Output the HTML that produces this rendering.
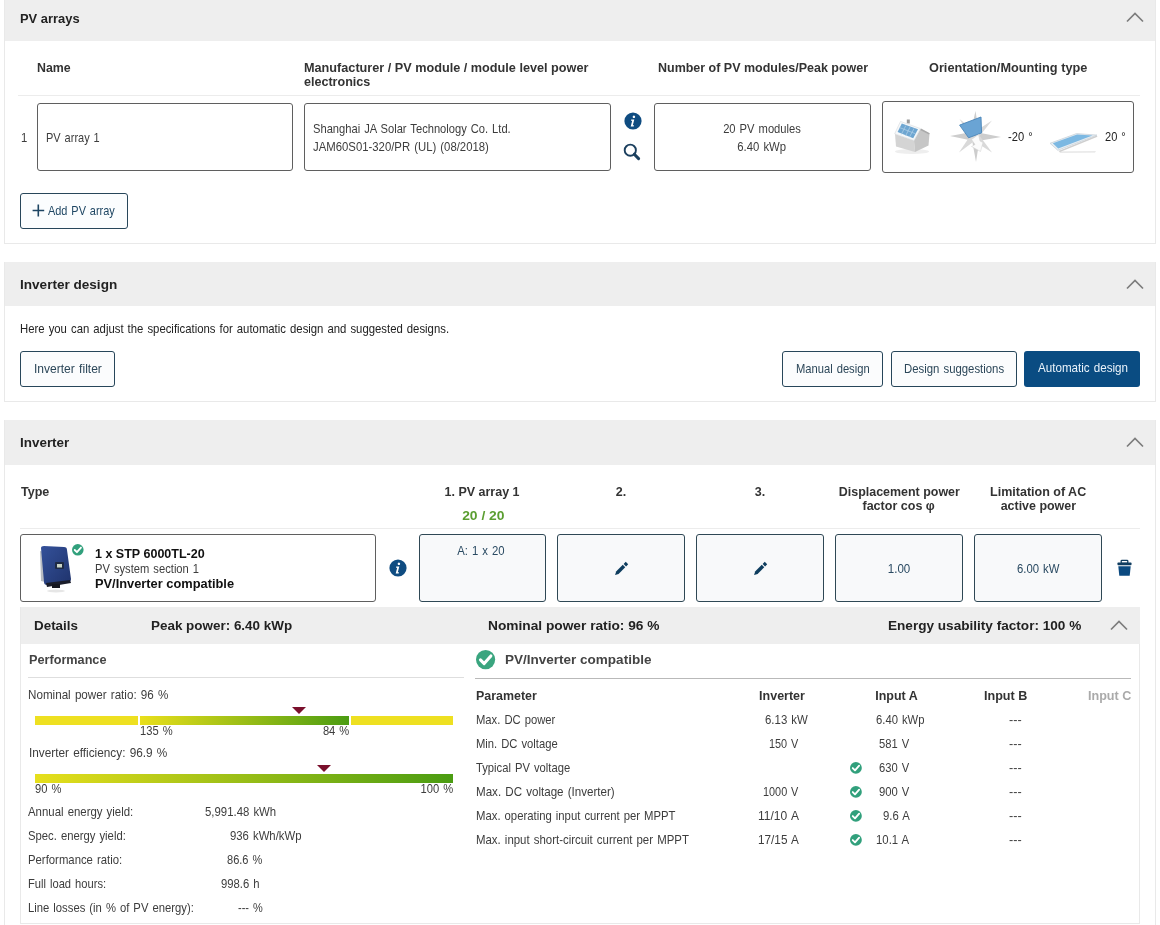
<!DOCTYPE html>
<html><head><meta charset="utf-8"><title>Sunny Design</title>
<style>
html,body{margin:0;padding:0;background:#fff;}
body{width:1160px;height:925px;overflow:hidden;position:relative;font-family:"Liberation Sans",sans-serif;}
body>div{position:absolute;box-sizing:border-box;white-space:pre;}
</style></head><body>
<div style="left:4px;top:-5px;width:1152px;height:249px;border:1px solid #e9e9e9;border-top:none;background:#fff"></div>
<div style="left:4px;top:-5px;width:1152px;height:46px;background:#eeeeee;border-left:1px solid #e9e9e9;border-right:1px solid #e9e9e9"></div>
<div style="left:19.5px;top:10.5px;width:600px;height:16px;font-size:13px;line-height:16px;font-weight:700;color:#222;text-align:left;word-spacing:0px;"><span id="t1" style="display:inline-block;transform:scaleX(0.9933);transform-origin:0 50%">PV arrays</span></div>
<svg style="position:absolute;left:1125px;top:11.4px;overflow:visible;" width="20" height="13" viewBox="0 0 20 13"><polyline points="2,10.5 10,2.5 18,10.5" fill="none" stroke="#7c7c7c" stroke-width="1.7"/></svg>
<div style="left:37px;top:59.75px;width:600px;height:16px;font-size:12px;line-height:16px;font-weight:700;color:#333;text-align:left;word-spacing:0px;"><span id="t2" style="display:inline-block;transform:scaleX(1.0302);transform-origin:0 50%">Name</span></div>
<div style="left:304px;top:59.5px;width:600px;height:16px;font-size:12px;line-height:16px;font-weight:700;color:#333;text-align:left;word-spacing:0px;"><span id="t3" style="display:inline-block;transform:scaleX(1.0558);transform-origin:0 50%">Manufacturer / PV module / module level power</span></div>
<div style="left:304px;top:73.75px;width:600px;height:16px;font-size:12px;line-height:16px;font-weight:700;color:#333;text-align:left;word-spacing:0px;"><span id="t4" style="display:inline-block;transform:scaleX(1.0462);transform-origin:0 50%">electronics</span></div>
<div style="left:658px;top:59.75px;width:600px;height:16px;font-size:12px;line-height:16px;font-weight:700;color:#333;text-align:left;word-spacing:0px;"><span id="t5" style="display:inline-block;transform:scaleX(1.0396);transform-origin:0 50%">Number of PV modules/Peak power</span></div>
<div style="left:929px;top:59.75px;width:600px;height:16px;font-size:12px;line-height:16px;font-weight:700;color:#333;text-align:left;word-spacing:0px;"><span id="t6" style="display:inline-block;transform:scaleX(1.0604);transform-origin:0 50%">Orientation/Mounting type</span></div>
<div style="left:18px;top:95px;width:1122px;height:1px;background:#ececec"></div>
<div style="left:21px;top:129.75px;width:600px;height:16px;font-size:12.4px;line-height:16px;font-weight:400;color:#3d3d3d;text-align:left;word-spacing:1.0px;"><span id="t7" style="display:inline-block;transform:scaleX(0.9124);transform-origin:0 50%">1</span></div>
<div style="left:37px;top:103px;width:256px;height:68px;border:1px solid #5f5f5f;border-radius:3px;background:#fff"></div>
<div style="left:45.6px;top:129.75px;width:600px;height:16px;font-size:12.4px;line-height:16px;font-weight:400;color:#3d3d3d;text-align:left;word-spacing:1.0px;"><span id="t8" style="display:inline-block;transform:scaleX(0.8877);transform-origin:0 50%">PV array 1</span></div>
<div style="left:304px;top:103px;width:307px;height:68px;border:1px solid #5f5f5f;border-radius:3px;background:#fff"></div>
<div style="left:312.8px;top:120.75px;width:600px;height:16px;font-size:12.4px;line-height:16px;font-weight:400;color:#3d3d3d;text-align:left;word-spacing:1.0px;"><span id="t9" style="display:inline-block;transform:scaleX(0.9000);transform-origin:0 50%">Shanghai JA Solar Technology Co. Ltd.</span></div>
<div style="left:312.8px;top:138.75px;width:600px;height:16px;font-size:12.4px;line-height:16px;font-weight:400;color:#3d3d3d;text-align:left;word-spacing:1.0px;"><span id="t10" style="display:inline-block;transform:scaleX(0.9157);transform-origin:0 50%">JAM60S01-320/PR (UL) (08/2018)</span></div>
<svg style="position:absolute;left:624px;top:112px;overflow:visible;" width="18" height="18" viewBox="0 0 18 18"><circle cx="9" cy="9" r="8.6" fill="#0f4c81"/><path d="M9.9 3.6a1.25 1.25 0 1 0 0.01 0z" fill="#fff"/><path d="M7.2 7.6h3.1l-1.5 5.6h1.2l-0.3 1.2h-3l1.5-5.6h-1.2z" fill="#fff"/></svg>
<svg style="position:absolute;left:622px;top:142px;overflow:visible;" width="20" height="20" viewBox="0 0 20 20"><circle cx="8.3" cy="8.2" r="5.6" fill="none" stroke="#1b3f5e" stroke-width="1.9"/><line x1="12.3" y1="12.2" x2="16.6" y2="16.6" stroke="#1b3f5e" stroke-width="3" stroke-linecap="round"/></svg>
<div style="left:654px;top:103px;width:217px;height:68px;border:1px solid #5f5f5f;border-radius:3px;background:#fff"></div>
<div style="left:462.0px;top:120.75px;width:600px;height:16px;font-size:12.4px;line-height:16px;font-weight:400;color:#3d3d3d;text-align:center;word-spacing:1.0px;"><span id="t11" style="display:inline-block;transform:scaleX(0.9038);transform-origin:50% 50%">20 PV modules</span></div>
<div style="left:462.0px;top:138.75px;width:600px;height:16px;font-size:12.4px;line-height:16px;font-weight:400;color:#3d3d3d;text-align:center;word-spacing:1.0px;"><span id="t12" style="display:inline-block;transform:scaleX(0.9136);transform-origin:50% 50%">6.40 kWp</span></div>
<div style="left:882px;top:101px;width:252px;height:72px;border:1px solid #5f5f5f;border-radius:3px;background:#fff"></div>
<svg style="position:absolute;left:888px;top:112px;overflow:visible;filter:blur(0.35px)" width="48" height="48" viewBox="0 0 48 48">
<ellipse cx="24" cy="39.5" rx="17" ry="2.6" fill="#eeeeee"/>
<path d="M7 22 L26 28.5 L27 40 L8 34.5 Z" fill="#d4d4d4"/>
<path d="M26 28.5 L32.5 16.8 L41.5 21.5 L40.5 33.5 L27 40 Z" fill="#c6c6c6"/>
<path d="M33 16.5 L41.8 21.2 L41 22.6 L32.6 18.2 Z" fill="#aaaaaa"/>
<rect x="18.8" y="7.5" width="3" height="4" fill="#9a9a9a"/>
<path d="M6.7 21.8 L12.5 9.4 L32.4 16.6 L26 28.5 Z" fill="#f7f9fa" stroke="#d6dadd" stroke-width="0.6"/>
<path d="M9.6 19.9 L13.8 11.4 L30 17.3 L25.2 26.3 Z" fill="#6ea6d1"/>
<path d="M11.7 15.6 L27.6 21.8 M17.8 13.6 L13.3 22.5 M22 15.1 L17.5 24 M26 16.6 L21.4 25.3" stroke="#b3d1e8" stroke-width="0.7"/>
</svg>
<svg style="position:absolute;left:944px;top:106px;overflow:visible;filter:blur(0.45px)" width="60" height="60" viewBox="0 0 60 60">
<g fill="#cdcdcd">
<path d="M31.5 5 L35 27 L30 30 L26.5 27 Z"/>
<path d="M57 31 L34 35 L30 30 L34 26.5 Z"/>
<path d="M32 56 L28 34 L30 30 L35.5 34 Z"/>
<path d="M6 30 L27.5 26 L30 30 L27.5 34.5 Z"/>
</g>
<g fill="#d9d9d9">
<path d="M48 14.5 L34 32 L30 30 L31 25.5 Z"/>
<path d="M48 46.5 L30 35 L30 30 L35 29 Z"/>
<path d="M15 46.5 L26 30 L30 30 L30.5 35 Z"/>
<path d="M15.5 13 L32 25.5 L30 30 L26 30.5 Z"/>
</g>
<path d="M15.6 19.1 L37 11 L37.6 26.9 L24.6 31.8 Z" fill="#6aa4d4" stroke="#4a84b8" stroke-width="0.9"/>
<path d="M27.5 33.5 L34.5 28.5 L36 35 L39 36.5 L36.5 45.5 L27.5 40.5 L31 38.5 Z" fill="#fbfbfb" stroke="#cfcfcf" stroke-width="0.5"/>
</svg>
<div style="left:1007.5px;top:128.75px;width:600px;height:16px;font-size:12.4px;line-height:16px;font-weight:400;color:#222;text-align:left;word-spacing:1.0px;"><span id="t13" style="display:inline-block;transform:scaleX(0.9014);transform-origin:0 50%">-20 °</span></div>
<svg style="position:absolute;left:1040px;top:120px;overflow:visible;filter:blur(0.35px)" width="60" height="36" viewBox="0 0 60 36">
<path d="M19 31.5 L56 31.2 L55 32.6 L20 32.8 Z" fill="#e2e2e2"/>
<path d="M18.5 31 L56.5 15.5 L57.5 16.8 L20 32 Z" fill="#cfcfcf"/>
<path d="M10 23.3 L36.5 13.6 L57 15.1 L17.8 30.3 Z" fill="#e8eef3" stroke="#c9d2d9" stroke-width="0.8"/>
<path d="M12.8 23.2 L37 14.6 L52.5 15.6 L18.2 28.6 Z" fill="#7cb8e2"/>
</svg>
<div style="left:1104.8px;top:128.75px;width:600px;height:16px;font-size:12.4px;line-height:16px;font-weight:400;color:#222;text-align:left;word-spacing:1.0px;"><span id="t14" style="display:inline-block;transform:scaleX(0.8921);transform-origin:0 50%">20 °</span></div>
<div style="left:20px;top:193px;width:108px;height:36px;border:1px solid #27465a;border-radius:3px;background:#fbfdfe"></div>
<svg style="position:absolute;left:32px;top:204px;overflow:visible;" width="13" height="13" viewBox="0 0 13 13"><path d="M6.3 0.5v12M0.6 6.5h11.6" stroke="#1e4663" stroke-width="1.6"/></svg>
<div style="left:47.6px;top:203.0px;width:600px;height:16px;font-size:12.4px;line-height:16px;font-weight:400;color:#1e4663;text-align:left;word-spacing:1.0px;"><span id="t15" style="display:inline-block;transform:scaleX(0.8816);transform-origin:0 50%">Add PV array</span></div>
<div style="left:4px;top:262px;width:1152px;height:140px;border:1px solid #e9e9e9;border-top:none;background:#fff"></div>
<div style="left:4px;top:262px;width:1152px;height:44px;background:#eeeeee;border-left:1px solid #e9e9e9;border-right:1px solid #e9e9e9"></div>
<div style="left:19.5px;top:276.5px;width:600px;height:16px;font-size:13px;line-height:16px;font-weight:700;color:#222;text-align:left;word-spacing:0px;"><span id="t16" style="display:inline-block;transform:scaleX(1.0430);transform-origin:0 50%">Inverter design</span></div>
<svg style="position:absolute;left:1125px;top:278.4px;overflow:visible;" width="20" height="13" viewBox="0 0 20 13"><polyline points="2,10.5 10,2.5 18,10.5" fill="none" stroke="#7c7c7c" stroke-width="1.7"/></svg>
<div style="left:20.2px;top:321.0px;width:600px;height:16px;font-size:12.4px;line-height:16px;font-weight:400;color:#222;text-align:left;word-spacing:1.0px;"><span id="t17" style="display:inline-block;transform:scaleX(0.9147);transform-origin:0 50%">Here you can adjust the specifications for automatic design and suggested designs.</span></div>
<div style="left:20px;top:351px;width:95px;height:36px;border:1px solid #27465a;border-radius:3px;background:#fbfcfd"></div>
<div style="left:33.6px;top:360.5px;width:600px;height:16px;font-size:12.4px;line-height:16px;font-weight:400;color:#2c4759;text-align:left;word-spacing:1.0px;"><span id="t18" style="display:inline-block;transform:scaleX(0.9714);transform-origin:0 50%">Inverter filter</span></div>
<div style="left:782px;top:351px;width:101px;height:36px;border:1px solid #27465a;border-radius:3px;background:#fbfcfd"></div>
<div style="left:796px;top:360.5px;width:600px;height:16px;font-size:12.4px;line-height:16px;font-weight:400;color:#2c4759;text-align:left;word-spacing:1.0px;"><span id="t19" style="display:inline-block;transform:scaleX(0.9024);transform-origin:0 50%">Manual design</span></div>
<div style="left:891px;top:351px;width:126px;height:36px;border:1px solid #27465a;border-radius:3px;background:#fbfcfd"></div>
<div style="left:904px;top:360.5px;width:600px;height:16px;font-size:12.4px;line-height:16px;font-weight:400;color:#2c4759;text-align:left;word-spacing:1.0px;"><span id="t20" style="display:inline-block;transform:scaleX(0.9174);transform-origin:0 50%">Design suggestions</span></div>
<div style="left:1024px;top:351px;width:116px;height:36px;background:#0a4c82;border-radius:3px"></div>
<div style="left:1037.5px;top:360.25px;width:600px;height:16px;font-size:12.4px;line-height:16px;font-weight:400;color:#eaf3fb;text-align:left;word-spacing:1.0px;"><span id="t21" style="display:inline-block;transform:scaleX(0.9375);transform-origin:0 50%">Automatic design</span></div>
<div style="left:4px;top:420px;width:1152px;height:511px;border:1px solid #e9e9e9;border-top:none;background:#fff"></div>
<div style="left:4px;top:420px;width:1152px;height:45px;background:#eeeeee;border-left:1px solid #e9e9e9;border-right:1px solid #e9e9e9"></div>
<div style="left:19.5px;top:434.5px;width:600px;height:16px;font-size:13px;line-height:16px;font-weight:700;color:#222;text-align:left;word-spacing:0px;"><span id="t22" style="display:inline-block;transform:scaleX(1.0336);transform-origin:0 50%">Inverter</span></div>
<svg style="position:absolute;left:1125px;top:436.4px;overflow:visible;" width="20" height="13" viewBox="0 0 20 13"><polyline points="2,10.5 10,2.5 18,10.5" fill="none" stroke="#7c7c7c" stroke-width="1.7"/></svg>
<div style="left:20.5px;top:483.75px;width:600px;height:16px;font-size:12px;line-height:16px;font-weight:700;color:#333;text-align:left;word-spacing:0px;"><span id="t23" style="display:inline-block;transform:scaleX(1.0448);transform-origin:0 50%">Type</span></div>
<div style="left:182.39999999999998px;top:483.75px;width:600px;height:16px;font-size:12px;line-height:16px;font-weight:700;color:#333;text-align:center;word-spacing:0px;"><span id="t24" style="display:inline-block;transform:scaleX(1.0409);transform-origin:50% 50%">1. PV array 1</span></div>
<div style="left:183.0px;top:507.75px;width:600px;height:16px;font-size:12px;line-height:16px;font-weight:700;color:#5b9e31;text-align:center;word-spacing:0px;"><span id="t25" style="display:inline-block;transform:scaleX(1.1541);transform-origin:50% 50%">20 / 20</span></div>
<div style="left:321.5px;top:483.75px;width:600px;height:16px;font-size:12px;line-height:16px;font-weight:700;color:#333;text-align:center;word-spacing:0px;"><span id="t26" style="display:inline-block;transform:scaleX(1.0416);transform-origin:50% 50%">2.</span></div>
<div style="left:460.5px;top:483.75px;width:600px;height:16px;font-size:12px;line-height:16px;font-weight:700;color:#333;text-align:center;word-spacing:0px;"><span id="t27" style="display:inline-block;transform:scaleX(1.0416);transform-origin:50% 50%">3.</span></div>
<div style="left:599.0px;top:483.75px;width:600px;height:16px;font-size:12px;line-height:16px;font-weight:700;color:#333;text-align:center;word-spacing:0px;"><span id="t28" style="display:inline-block;transform:scaleX(1.0374);transform-origin:50% 50%">Displacement power</span></div>
<div style="left:599.0px;top:498.25px;width:600px;height:16px;font-size:12px;line-height:16px;font-weight:700;color:#333;text-align:center;word-spacing:0px;"><span id="t29" style="display:inline-block;transform:scaleX(1.0442);transform-origin:50% 50%">factor cos φ</span></div>
<div style="left:738.0px;top:483.75px;width:600px;height:16px;font-size:12px;line-height:16px;font-weight:700;color:#333;text-align:center;word-spacing:0px;"><span id="t30" style="display:inline-block;transform:scaleX(1.0425);transform-origin:50% 50%">Limitation of AC</span></div>
<div style="left:738.0px;top:498.25px;width:600px;height:16px;font-size:12px;line-height:16px;font-weight:700;color:#333;text-align:center;word-spacing:0px;"><span id="t31" style="display:inline-block;transform:scaleX(1.0358);transform-origin:50% 50%">active power</span></div>
<div style="left:20px;top:528px;width:1120px;height:1px;background:#ececec"></div>
<div style="left:20px;top:534px;width:356px;height:68px;border:1px solid #5f5f5f;border-radius:3px;background:#fff"></div>
<svg style="position:absolute;left:36px;top:543px;overflow:visible;filter:blur(0.3px)" width="40" height="50" viewBox="0 0 40 50">
<defs><linearGradient id="inv" x1="0" y1="0" x2="1" y2="1"><stop offset="0" stop-color="#34519a"/><stop offset="1" stop-color="#1f336c"/></linearGradient></defs>
<ellipse cx="20" cy="48" rx="9" ry="1.5" fill="#e6e6e6"/>
<path d="M4 8 L5 38 L9 39 L8 9 Z" fill="#b8bcc2"/>
<path d="M5 5 Q5 3 8 3 L28 4 Q31 4 31 7 L35 36 Q35 39 32 39 L11 42 Q8 42 8 39 Z" fill="url(#inv)"/>
<path d="M10 40 L34 37 L35 40 L11 44 Z" fill="#1a1d2a"/>
<rect x="16" y="41" width="8" height="4" fill="#15171f"/>
<rect x="19" y="19" width="9" height="7" rx="1" fill="#1e2a44"/>
<rect x="21" y="21" width="5" height="3.5" fill="#c9d4c6"/>
</svg>
<svg style="position:absolute;left:71.9px;top:543.7px;overflow:visible;" width="11.6" height="11.6" viewBox="0 0 11.6 11.6"><circle cx="5.8" cy="5.8" r="5.8" fill="#31a07c"/><polyline points="2.706666666666666,5.993333333333333 4.93,8.216666666666667 8.99,3.5766666666666667" fill="none" stroke="#fff" stroke-width="1.8366666666666667" stroke-linecap="round" stroke-linejoin="round"/></svg>
<div style="left:95.2px;top:545.75px;width:600px;height:16px;font-size:12px;line-height:16px;font-weight:700;color:#111;text-align:left;word-spacing:0px;"><span id="t32" style="display:inline-block;transform:scaleX(1.0429);transform-origin:0 50%">1 x STP 6000TL-20</span></div>
<div style="left:95.2px;top:560.75px;width:600px;height:16px;font-size:12.4px;line-height:16px;font-weight:400;color:#3d3d3d;text-align:left;word-spacing:1.0px;"><span id="t33" style="display:inline-block;transform:scaleX(0.9028);transform-origin:0 50%">PV system section 1</span></div>
<div style="left:95.2px;top:575.75px;width:600px;height:16px;font-size:12px;line-height:16px;font-weight:700;color:#111;text-align:left;word-spacing:0px;"><span id="t34" style="display:inline-block;transform:scaleX(1.0692);transform-origin:0 50%">PV/Inverter compatible</span></div>
<svg style="position:absolute;left:389px;top:559px;overflow:visible;" width="18" height="18" viewBox="0 0 18 18"><circle cx="9" cy="9" r="8.6" fill="#0f4c81"/><path d="M9.9 3.6a1.25 1.25 0 1 0 0.01 0z" fill="#fff"/><path d="M7.2 7.6h3.1l-1.5 5.6h1.2l-0.3 1.2h-3l1.5-5.6h-1.2z" fill="#fff"/></svg>
<div style="left:419px;top:534px;width:127px;height:68px;border:1px solid #2f4855;border-radius:3px;background:#f8f9fa"></div>
<div style="left:180.5px;top:542.75px;width:600px;height:16px;font-size:12.4px;line-height:16px;font-weight:400;color:#2a4a62;text-align:center;word-spacing:1.0px;"><span id="t35" style="display:inline-block;transform:scaleX(0.9135);transform-origin:50% 50%">A: 1 x 20</span></div>
<div style="left:557px;top:534px;width:128px;height:68px;border:1px solid #2f4855;border-radius:3px;background:#f8f9fa"></div>
<svg style="position:absolute;left:611.3px;top:559.2px;overflow:visible;" width="20" height="20" viewBox="0 0 20 20"><g transform="rotate(45 10 10)"><rect x="8.3" y="1.6" width="3.5" height="3" fill="#0e3d5e"/><path d="M8.3 5.8h3.5v9.4l-1.75 3.2l-1.75-3.2z" fill="#0e3d5e"/></g></svg>
<div style="left:696px;top:534px;width:128px;height:68px;border:1px solid #2f4855;border-radius:3px;background:#f8f9fa"></div>
<svg style="position:absolute;left:749.5px;top:559.2px;overflow:visible;" width="20" height="20" viewBox="0 0 20 20"><g transform="rotate(45 10 10)"><rect x="8.3" y="1.6" width="3.5" height="3" fill="#0e3d5e"/><path d="M8.3 5.8h3.5v9.4l-1.75 3.2l-1.75-3.2z" fill="#0e3d5e"/></g></svg>
<div style="left:835px;top:534px;width:128px;height:68px;border:1px solid #2f4855;border-radius:3px;background:#f8f9fa"></div>
<div style="left:599.0px;top:560.75px;width:600px;height:16px;font-size:12.4px;line-height:16px;font-weight:400;color:#2a4a62;text-align:center;word-spacing:1.0px;"><span id="t36" style="display:inline-block;transform:scaleX(0.9295);transform-origin:50% 50%">1.00</span></div>
<div style="left:974px;top:534px;width:128px;height:68px;border:1px solid #2f4855;border-radius:3px;background:#f8f9fa"></div>
<div style="left:738.0px;top:560.75px;width:600px;height:16px;font-size:12.4px;line-height:16px;font-weight:400;color:#2a4a62;text-align:center;word-spacing:1.0px;"><span id="t37" style="display:inline-block;transform:scaleX(0.9138);transform-origin:50% 50%">6.00 kW</span></div>
<svg style="position:absolute;left:1116.5px;top:560px;overflow:visible;" width="16" height="18" viewBox="0 0 16 18"><rect x="4.2" y="0.3" width="6.6" height="3" rx="0.8" fill="none" stroke="#103d60" stroke-width="1.3"/><rect x="0.5" y="2.6" width="14" height="2.6" rx="0.6" fill="#103d60"/><path d="M1.3 6.2h12.4l-1 9.6h-10.4z" fill="#0b4a80"/></svg>
<div style="left:20px;top:607px;width:1120px;height:317px;border:1px solid #e9e9e9;background:#fff"></div>
<div style="left:21px;top:607px;width:1119px;height:37px;background:#eeeeee"></div>
<div style="left:34px;top:617.5px;width:600px;height:16px;font-size:13px;line-height:16px;font-weight:700;color:#222;text-align:left;word-spacing:0px;"><span id="t38" style="display:inline-block;transform:scaleX(1.0313);transform-origin:0 50%">Details</span></div>
<div style="left:151px;top:617.5px;width:600px;height:16px;font-size:13px;line-height:16px;font-weight:700;color:#222;text-align:left;word-spacing:0px;"><span id="t39" style="display:inline-block;transform:scaleX(1.0336);transform-origin:0 50%">Peak power: 6.40 kWp</span></div>
<div style="left:488px;top:617.5px;width:600px;height:16px;font-size:13px;line-height:16px;font-weight:700;color:#222;text-align:left;word-spacing:0px;"><span id="t40" style="display:inline-block;transform:scaleX(1.0552);transform-origin:0 50%">Nominal power ratio: 96 %</span></div>
<div style="left:887.7px;top:617.5px;width:600px;height:16px;font-size:13px;line-height:16px;font-weight:700;color:#222;text-align:left;word-spacing:0px;"><span id="t41" style="display:inline-block;transform:scaleX(1.0449);transform-origin:0 50%">Energy usability factor: 100 %</span></div>
<svg style="position:absolute;left:1108.5px;top:618.8px;overflow:visible;" width="20" height="13" viewBox="0 0 20 13"><polyline points="2,10.5 10,2.5 18,10.5" fill="none" stroke="#7c7c7c" stroke-width="1.7"/></svg>
<div style="left:28.6px;top:651.5px;width:600px;height:16px;font-size:13px;line-height:16px;font-weight:700;color:#444;text-align:left;word-spacing:0px;"><span id="t42" style="display:inline-block;transform:scaleX(0.9747);transform-origin:0 50%">Performance</span></div>
<div style="left:28px;top:677px;width:436px;height:1px;background:#dedede"></div>
<svg style="position:absolute;left:475.7px;top:649.9px;overflow:visible;" width="19.2" height="19.2" viewBox="0 0 19.2 19.2"><circle cx="9.6" cy="9.6" r="9.6" fill="#3aa57f"/><polyline points="4.4799999999999995,9.92 8.16,13.6 14.879999999999999,5.92" fill="none" stroke="#fff" stroke-width="3.0399999999999996" stroke-linecap="round" stroke-linejoin="round"/></svg>
<div style="left:505.3px;top:651.5px;width:600px;height:16px;font-size:13px;line-height:16px;font-weight:700;color:#444;text-align:left;word-spacing:0px;"><span id="t43" style="display:inline-block;transform:scaleX(1.0392);transform-origin:0 50%">PV/Inverter compatible</span></div>
<div style="left:475px;top:678px;width:656px;height:1px;background:#b9b9b9"></div>
<div style="left:28px;top:686.75px;width:600px;height:16px;font-size:12.4px;line-height:16px;font-weight:400;color:#3d3d3d;text-align:left;word-spacing:1.0px;"><span id="t44" style="display:inline-block;transform:scaleX(0.9396);transform-origin:0 50%">Nominal power ratio: 96 %</span></div>
<div style="left:35px;top:716px;width:103px;height:9px;background:#eee021"></div>
<div style="left:140px;top:716px;width:209px;height:9px;background:linear-gradient(to right,#e9df1b,#4b9c12)"></div>
<div style="left:351px;top:716px;width:102px;height:9px;background:#eee021"></div>
<svg style="position:absolute;left:292px;top:707px;overflow:visible;" width="14" height="7" viewBox="0 0 14 7"><path d="M0 0h14l-7 7z" fill="#7a0f2c"/></svg>
<div style="left:140.4px;top:723.25px;width:600px;height:16px;font-size:12.4px;line-height:16px;font-weight:400;color:#3d3d3d;text-align:left;word-spacing:1.0px;"><span id="t45" style="display:inline-block;transform:scaleX(0.9028);transform-origin:0 50%">135 %</span></div>
<div style="left:-251px;top:723.25px;width:600px;height:16px;font-size:12.4px;line-height:16px;font-weight:400;color:#3d3d3d;text-align:right;word-spacing:1.0px;"><span id="t46" style="display:inline-block;transform:scaleX(0.9010);transform-origin:100% 50%">84 %</span></div>
<div style="left:28.5px;top:745.25px;width:600px;height:16px;font-size:12.4px;line-height:16px;font-weight:400;color:#3d3d3d;text-align:left;word-spacing:1.0px;"><span id="t47" style="display:inline-block;transform:scaleX(0.9517);transform-origin:0 50%">Inverter efficiency: 96.9 %</span></div>
<div style="left:35px;top:774px;width:418px;height:9px;background:linear-gradient(to right,#e7df1c,#4a9c12)"></div>
<svg style="position:absolute;left:317px;top:765px;overflow:visible;" width="14" height="7" viewBox="0 0 14 7"><path d="M0 0h14l-7 7z" fill="#7a0f2c"/></svg>
<div style="left:35px;top:781.25px;width:600px;height:16px;font-size:12.4px;line-height:16px;font-weight:400;color:#3d3d3d;text-align:left;word-spacing:1.0px;"><span id="t48" style="display:inline-block;transform:scaleX(0.9010);transform-origin:0 50%">90 %</span></div>
<div style="left:-147px;top:781.25px;width:600px;height:16px;font-size:12.4px;line-height:16px;font-weight:400;color:#3d3d3d;text-align:right;word-spacing:1.0px;"><span id="t49" style="display:inline-block;transform:scaleX(0.9028);transform-origin:100% 50%">100 %</span></div>
<div style="left:28px;top:804.0px;width:600px;height:16px;font-size:12.4px;line-height:16px;font-weight:400;color:#3d3d3d;text-align:left;word-spacing:1.0px;"><span id="t50" style="display:inline-block;transform:scaleX(0.9211);transform-origin:0 50%">Annual energy yield:</span></div>
<div style="left:204.8px;top:804.0px;width:600px;height:16px;font-size:12.4px;line-height:16px;font-weight:400;color:#3d3d3d;text-align:left;word-spacing:1.0px;"><span id="t51" style="display:inline-block;transform:scaleX(0.9184);transform-origin:0 50%">5,991.48 kWh</span></div>
<div style="left:28px;top:827.75px;width:600px;height:16px;font-size:12.4px;line-height:16px;font-weight:400;color:#3d3d3d;text-align:left;word-spacing:1.0px;"><span id="t52" style="display:inline-block;transform:scaleX(0.9109);transform-origin:0 50%">Spec. energy yield:</span></div>
<div style="left:230.4px;top:827.75px;width:600px;height:16px;font-size:12.4px;line-height:16px;font-weight:400;color:#3d3d3d;text-align:left;word-spacing:1.0px;"><span id="t53" style="display:inline-block;transform:scaleX(0.9146);transform-origin:0 50%">936 kWh/kWp</span></div>
<div style="left:28px;top:851.75px;width:600px;height:16px;font-size:12.4px;line-height:16px;font-weight:400;color:#3d3d3d;text-align:left;word-spacing:1.0px;"><span id="t54" style="display:inline-block;transform:scaleX(0.9153);transform-origin:0 50%">Performance ratio:</span></div>
<div style="left:227px;top:851.75px;width:600px;height:16px;font-size:12.4px;line-height:16px;font-weight:400;color:#3d3d3d;text-align:left;word-spacing:1.0px;"><span id="t55" style="display:inline-block;transform:scaleX(0.8920);transform-origin:0 50%">86.6 %</span></div>
<div style="left:28px;top:875.5px;width:600px;height:16px;font-size:12.4px;line-height:16px;font-weight:400;color:#3d3d3d;text-align:left;word-spacing:1.0px;"><span id="t56" style="display:inline-block;transform:scaleX(0.9006);transform-origin:0 50%">Full load hours:</span></div>
<div style="left:221px;top:875.5px;width:600px;height:16px;font-size:12.4px;line-height:16px;font-weight:400;color:#3d3d3d;text-align:left;word-spacing:1.0px;"><span id="t57" style="display:inline-block;transform:scaleX(0.9106);transform-origin:0 50%">998.6 h</span></div>
<div style="left:28px;top:899.5px;width:600px;height:16px;font-size:12.4px;line-height:16px;font-weight:400;color:#3d3d3d;text-align:left;word-spacing:1.0px;"><span id="t58" style="display:inline-block;transform:scaleX(0.9093);transform-origin:0 50%">Line losses (in % of PV energy):</span></div>
<div style="left:237.5px;top:899.5px;width:600px;height:16px;font-size:12.4px;line-height:16px;font-weight:400;color:#3d3d3d;text-align:left;word-spacing:1.0px;"><span id="t59" style="display:inline-block;transform:scaleX(0.8868);transform-origin:0 50%">--- %</span></div>
<div style="left:475.5px;top:687.5px;width:600px;height:16px;font-size:12px;line-height:16px;font-weight:700;color:#333;text-align:left;word-spacing:0px;"><span id="t60" style="display:inline-block;transform:scaleX(1.0350);transform-origin:0 50%">Parameter</span></div>
<div style="left:482.0px;top:687.5px;width:600px;height:16px;font-size:12px;line-height:16px;font-weight:700;color:#333;text-align:center;word-spacing:0px;"><span id="t61" style="display:inline-block;transform:scaleX(1.0407);transform-origin:50% 50%">Inverter</span></div>
<div style="left:596.0px;top:687.5px;width:600px;height:16px;font-size:12px;line-height:16px;font-weight:700;color:#333;text-align:center;word-spacing:0px;"><span id="t62" style="display:inline-block;transform:scaleX(1.0368);transform-origin:50% 50%">Input A</span></div>
<div style="left:705.8px;top:687.5px;width:600px;height:16px;font-size:12px;line-height:16px;font-weight:700;color:#333;text-align:center;word-spacing:0px;"><span id="t63" style="display:inline-block;transform:scaleX(1.0483);transform-origin:50% 50%">Input B</span></div>
<div style="left:531px;top:687.5px;width:600px;height:16px;font-size:12px;line-height:16px;font-weight:700;color:#aaa;text-align:right;word-spacing:0px;"><span id="t64" style="display:inline-block;transform:scaleX(1.0483);transform-origin:100% 50%">Input C</span></div>
<div style="left:475.5px;top:711.75px;width:600px;height:16px;font-size:12.4px;line-height:16px;font-weight:400;color:#3d3d3d;text-align:left;word-spacing:1.0px;"><span id="t65" style="display:inline-block;transform:scaleX(0.9077);transform-origin:0 50%">Max. DC power</span></div>
<div style="left:764.6px;top:711.75px;width:600px;height:16px;font-size:12.4px;line-height:16px;font-weight:400;color:#3d3d3d;text-align:left;word-spacing:1.0px;"><span id="t66" style="display:inline-block;transform:scaleX(0.9217);transform-origin:0 50%">6.13 kW</span></div>
<div style="left:875.8px;top:711.75px;width:600px;height:16px;font-size:12.4px;line-height:16px;font-weight:400;color:#3d3d3d;text-align:left;word-spacing:1.0px;"><span id="t67" style="display:inline-block;transform:scaleX(0.9094);transform-origin:0 50%">6.40 kWp</span></div>
<div style="left:1008.8px;top:711.75px;width:600px;height:16px;font-size:12.4px;line-height:16px;font-weight:400;color:#3d3d3d;text-align:left;word-spacing:1.0px;"><span id="t68" style="display:inline-block;transform:scaleX(1.0167);transform-origin:0 50%">---</span></div>
<div style="left:475.5px;top:735.75px;width:600px;height:16px;font-size:12.4px;line-height:16px;font-weight:400;color:#3d3d3d;text-align:left;word-spacing:1.0px;"><span id="t69" style="display:inline-block;transform:scaleX(0.9059);transform-origin:0 50%">Min. DC voltage</span></div>
<div style="left:768.6px;top:735.75px;width:600px;height:16px;font-size:12.4px;line-height:16px;font-weight:400;color:#3d3d3d;text-align:left;word-spacing:1.0px;"><span id="t70" style="display:inline-block;transform:scaleX(0.8788);transform-origin:0 50%">150 V</span></div>
<div style="left:879px;top:735.75px;width:600px;height:16px;font-size:12.4px;line-height:16px;font-weight:400;color:#3d3d3d;text-align:left;word-spacing:1.0px;"><span id="t71" style="display:inline-block;transform:scaleX(0.9030);transform-origin:0 50%">581 V</span></div>
<div style="left:1008.8px;top:735.75px;width:600px;height:16px;font-size:12.4px;line-height:16px;font-weight:400;color:#3d3d3d;text-align:left;word-spacing:1.0px;"><span id="t72" style="display:inline-block;transform:scaleX(1.0167);transform-origin:0 50%">---</span></div>
<div style="left:475.5px;top:759.75px;width:600px;height:16px;font-size:12.4px;line-height:16px;font-weight:400;color:#3d3d3d;text-align:left;word-spacing:1.0px;"><span id="t73" style="display:inline-block;transform:scaleX(0.9065);transform-origin:0 50%">Typical PV voltage</span></div>
<div style="left:879px;top:759.75px;width:600px;height:16px;font-size:12.4px;line-height:16px;font-weight:400;color:#3d3d3d;text-align:left;word-spacing:1.0px;"><span id="t74" style="display:inline-block;transform:scaleX(0.9030);transform-origin:0 50%">630 V</span></div>
<div style="left:1008.8px;top:759.75px;width:600px;height:16px;font-size:12.4px;line-height:16px;font-weight:400;color:#3d3d3d;text-align:left;word-spacing:1.0px;"><span id="t75" style="display:inline-block;transform:scaleX(1.0167);transform-origin:0 50%">---</span></div>
<svg style="position:absolute;left:850.4px;top:761.8000000000001px;overflow:visible;" width="11.8" height="11.8" viewBox="0 0 11.8 11.8"><circle cx="5.9" cy="5.9" r="5.9" fill="#31a07c"/><polyline points="2.7533333333333334,6.096666666666667 5.015000000000001,8.358333333333334 9.145,3.6383333333333336" fill="none" stroke="#fff" stroke-width="1.8683333333333334" stroke-linecap="round" stroke-linejoin="round"/></svg>
<div style="left:475.5px;top:783.75px;width:600px;height:16px;font-size:12.4px;line-height:16px;font-weight:400;color:#3d3d3d;text-align:left;word-spacing:1.0px;"><span id="t76" style="display:inline-block;transform:scaleX(0.9351);transform-origin:0 50%">Max. DC voltage (Inverter)</span></div>
<div style="left:762.5px;top:783.75px;width:600px;height:16px;font-size:12.4px;line-height:16px;font-weight:400;color:#3d3d3d;text-align:left;word-spacing:1.0px;"><span id="t77" style="display:inline-block;transform:scaleX(0.8775);transform-origin:0 50%">1000 V</span></div>
<div style="left:879px;top:783.75px;width:600px;height:16px;font-size:12.4px;line-height:16px;font-weight:400;color:#3d3d3d;text-align:left;word-spacing:1.0px;"><span id="t78" style="display:inline-block;transform:scaleX(0.9091);transform-origin:0 50%">900 V</span></div>
<div style="left:1008.8px;top:783.75px;width:600px;height:16px;font-size:12.4px;line-height:16px;font-weight:400;color:#3d3d3d;text-align:left;word-spacing:1.0px;"><span id="t79" style="display:inline-block;transform:scaleX(1.0167);transform-origin:0 50%">---</span></div>
<svg style="position:absolute;left:850.4px;top:785.8000000000001px;overflow:visible;" width="11.8" height="11.8" viewBox="0 0 11.8 11.8"><circle cx="5.9" cy="5.9" r="5.9" fill="#31a07c"/><polyline points="2.7533333333333334,6.096666666666667 5.015000000000001,8.358333333333334 9.145,3.6383333333333336" fill="none" stroke="#fff" stroke-width="1.8683333333333334" stroke-linecap="round" stroke-linejoin="round"/></svg>
<div style="left:475.5px;top:807.75px;width:600px;height:16px;font-size:12.4px;line-height:16px;font-weight:400;color:#3d3d3d;text-align:left;word-spacing:1.0px;"><span id="t80" style="display:inline-block;transform:scaleX(0.9132);transform-origin:0 50%">Max. operating input current per MPPT</span></div>
<div style="left:757.6px;top:807.75px;width:600px;height:16px;font-size:12.4px;line-height:16px;font-weight:400;color:#3d3d3d;text-align:left;word-spacing:1.0px;"><span id="t81" style="display:inline-block;transform:scaleX(0.9714);transform-origin:0 50%">11/10 A</span></div>
<div style="left:882.5px;top:807.75px;width:600px;height:16px;font-size:12.4px;line-height:16px;font-weight:400;color:#3d3d3d;text-align:left;word-spacing:1.0px;"><span id="t82" style="display:inline-block;transform:scaleX(0.9138);transform-origin:0 50%">9.6 A</span></div>
<div style="left:1008.8px;top:807.75px;width:600px;height:16px;font-size:12.4px;line-height:16px;font-weight:400;color:#3d3d3d;text-align:left;word-spacing:1.0px;"><span id="t83" style="display:inline-block;transform:scaleX(1.0167);transform-origin:0 50%">---</span></div>
<svg style="position:absolute;left:850.4px;top:809.8000000000001px;overflow:visible;" width="11.8" height="11.8" viewBox="0 0 11.8 11.8"><circle cx="5.9" cy="5.9" r="5.9" fill="#31a07c"/><polyline points="2.7533333333333334,6.096666666666667 5.015000000000001,8.358333333333334 9.145,3.6383333333333336" fill="none" stroke="#fff" stroke-width="1.8683333333333334" stroke-linecap="round" stroke-linejoin="round"/></svg>
<div style="left:475.5px;top:831.75px;width:600px;height:16px;font-size:12.4px;line-height:16px;font-weight:400;color:#3d3d3d;text-align:left;word-spacing:1.0px;"><span id="t84" style="display:inline-block;transform:scaleX(0.9221);transform-origin:0 50%">Max. input short-circuit current per MPPT</span></div>
<div style="left:757.6px;top:831.75px;width:600px;height:16px;font-size:12.4px;line-height:16px;font-weight:400;color:#3d3d3d;text-align:left;word-spacing:1.0px;"><span id="t85" style="display:inline-block;transform:scaleX(0.9488);transform-origin:0 50%">17/15 A</span></div>
<div style="left:876px;top:831.75px;width:600px;height:16px;font-size:12.4px;line-height:16px;font-weight:400;color:#3d3d3d;text-align:left;word-spacing:1.0px;"><span id="t86" style="display:inline-block;transform:scaleX(0.9167);transform-origin:0 50%">10.1 A</span></div>
<div style="left:1008.8px;top:831.75px;width:600px;height:16px;font-size:12.4px;line-height:16px;font-weight:400;color:#3d3d3d;text-align:left;word-spacing:1.0px;"><span id="t87" style="display:inline-block;transform:scaleX(1.0167);transform-origin:0 50%">---</span></div>
<svg style="position:absolute;left:850.4px;top:833.8000000000001px;overflow:visible;" width="11.8" height="11.8" viewBox="0 0 11.8 11.8"><circle cx="5.9" cy="5.9" r="5.9" fill="#31a07c"/><polyline points="2.7533333333333334,6.096666666666667 5.015000000000001,8.358333333333334 9.145,3.6383333333333336" fill="none" stroke="#fff" stroke-width="1.8683333333333334" stroke-linecap="round" stroke-linejoin="round"/></svg>
</body></html>
